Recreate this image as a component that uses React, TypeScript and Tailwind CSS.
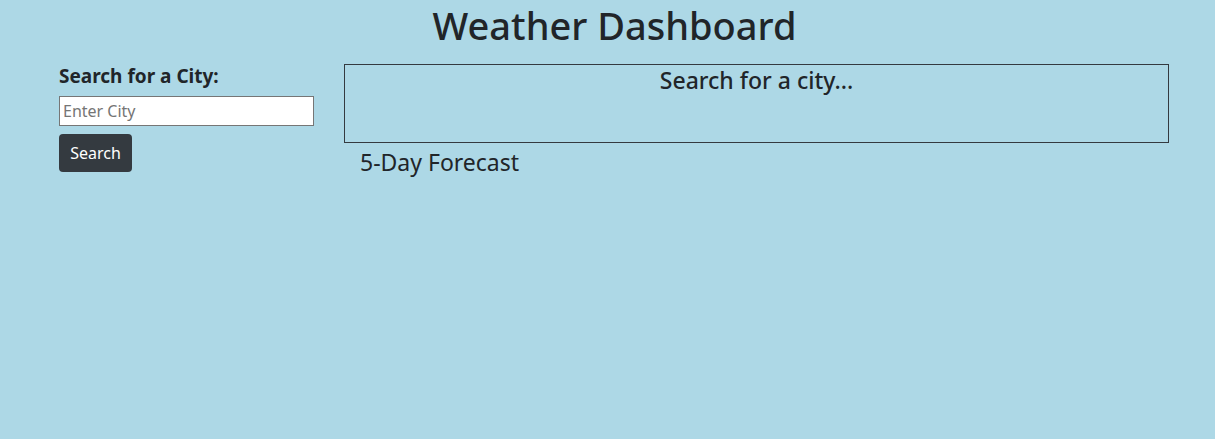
import React, { useState } from 'react';

export default function App() {
  const [city, setCity] = useState('');

  return (
    <div className="min-h-[439px] w-full bg-[#add8e6] pt-[2px] text-[#212529] font-['Noto_Sans',sans-serif]">
      <h1 className="pl-[14px] text-center text-[38px] font-medium leading-[46px]">Weather Dashboard</h1>

      <div className="mt-[16px] flex gap-[30px] pl-[59px] pr-[46px]">
        {/* search column */}
        <div className="flex w-[255px] flex-col items-start">
          <label htmlFor="city" className="text-[19px] font-bold leading-[24px]">
            Search for a City:
          </label>
          <input
            id="city"
            value={city}
            onChange={(e) => setCity(e.target.value)}
            placeholder="Enter City"
            className="mt-[8px] h-[30px] w-full border border-[#767676] bg-white px-[3px] text-[16px] outline-none placeholder:text-[#757575]"
          />
          <button
            type="button"
            className="mt-[8px] h-[38px] w-[73px] rounded-[4px] bg-[#343a40] text-[16px] text-white"
          >
            Search
          </button>
        </div>

        {/* results column */}
        <div className="flex-1">
          <div className="h-[79px] border border-[#343a40] text-center">
            <h3 className="text-[23px] font-medium leading-[30px]">Search for a city...</h3>
          </div>
          <h3 className="mt-[4px] pl-[16px] text-[23px] leading-[30px]">5-Day Forecast</h3>
        </div>
      </div>
    </div>
  );
}
